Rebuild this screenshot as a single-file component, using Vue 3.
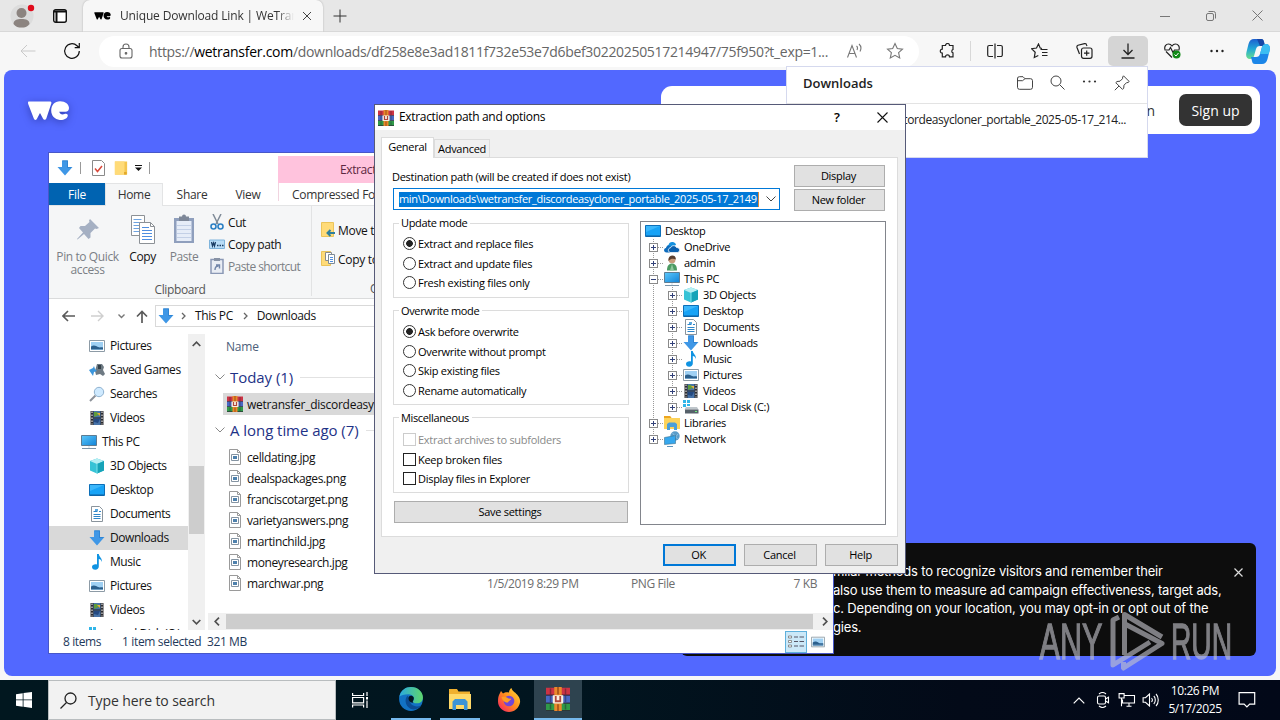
<script setup>
import { ref } from 'vue'

const navItems = ref([
  { name: 'Pictures', icon: 'pictures' },
  { name: 'Saved Games', icon: 'games' },
  { name: 'Searches', icon: 'lens' },
  { name: 'Videos', icon: 'videos' },
  { name: 'This PC', icon: 'pc', root: true },
  { name: '3D Objects', icon: 'cube' },
  { name: 'Desktop', icon: 'desktop' },
  { name: 'Documents', icon: 'docs' },
  { name: 'Downloads', icon: 'down', active: true },
  { name: 'Music', icon: 'music' },
  { name: 'Pictures', icon: 'pictures' },
  { name: 'Videos', icon: 'videos' },
  { name: 'Local Disk (C:)', icon: 'disk' }
])

const files = ref([
  { name: 'celldating.jpg' },
  { name: 'dealspackages.png' },
  { name: 'franciscotarget.png' },
  { name: 'varietyanswers.png' },
  { name: 'martinchild.jpg' },
  { name: 'moneyresearch.jpg' },
  { name: 'marchwar.png', date: '1/5/2019 8:29 PM', type: 'PNG File', size: '7 KB' }
])

const tree = ref([
  { name: 'Desktop', icon: 'desktop', level: 0 },
  { name: 'OneDrive', icon: 'cloud', level: 1 },
  { name: 'admin', icon: 'user', level: 1 },
  { name: 'This PC', icon: 'pc', level: 1, open: true },
  { name: '3D Objects', icon: 'cube', level: 2 },
  { name: 'Desktop', icon: 'desktop', level: 2 },
  { name: 'Documents', icon: 'docs', level: 2 },
  { name: 'Downloads', icon: 'down', level: 2 },
  { name: 'Music', icon: 'music', level: 2 },
  { name: 'Pictures', icon: 'pictures', level: 2 },
  { name: 'Videos', icon: 'videos', level: 2 },
  { name: 'Local Disk (C:)', icon: 'disk', level: 2, end: true },
  { name: 'Libraries', icon: 'library', level: 1 },
  { name: 'Network', icon: 'network', level: 1, end: true }
])

const updateMode = ref('Extract and replace files')
const updateModes = ['Extract and replace files', 'Extract and update files', 'Fresh existing files only']

const overwriteMode = ref('Ask before overwrite')
const overwriteModes = ['Ask before overwrite', 'Overwrite without prompt', 'Skip existing files', 'Rename automatically']

const misc = ref([
  { name: 'Extract archives to subfolders', disabled: true },
  { name: 'Keep broken files' },
  { name: 'Display files in Explorer' }
])
</script>

<template>
  <div class="screen">
    <!-- icon sprite -->
    <svg class="sprite" width="0" height="0">
      <defs>
        <linearGradient id="g-blue" x1="0" y1="0" x2="1" y2="1"><stop offset="0" stop-color="#5cc8fb" /><stop offset="1" stop-color="#1183d8" /></linearGradient>
        <linearGradient id="g-edge" x1="0" y1="0" x2="1" y2="0"><stop offset="0" stop-color="#2aa9e0" /><stop offset="1" stop-color="#5fd66b" /></linearGradient>
        <linearGradient id="g-fox" x1="1" y1="0" x2="0" y2="1"><stop offset="0" stop-color="#ffe23a" /><stop offset=".5" stop-color="#ff8a1d" /><stop offset="1" stop-color="#f5156c" /></linearGradient>
        <linearGradient id="g-cop" x1="0" y1="0" x2="0" y2="1"><stop offset="0" stop-color="#1d5fd0" /><stop offset=".5" stop-color="#22a9d6" /><stop offset="1" stop-color="#6ade8c" /></linearGradient>
      </defs>
      <symbol id="i-pictures" viewBox="0 0 16 16"><path d="M.5 2.500h15v11H.5z" fill="#fff" stroke="#8d9ba6" /><path d="M2 4h12v8H2z" fill="#9fd0f3" /><path d="M2 8.500c3-2 5-.5 7 .5s3 0 5 .5V12H2z" fill="#2b5f8c" /><path d="M2 11h12v1H2z" fill="#6f9fc4" /></symbol>
      <symbol id="i-games" viewBox="0 0 16 16"><path d="M8 2h5l2 3-1 3 2 4-2 2-3-2-4 1-1-4z" fill="#6e7a83" /><path d="M9 3h3v4H9z" fill="#333f47" /><path d="M0 8l4-2 1-2 1 3 2 2-3 1-1 4-2-3z" fill="#3c96dc" /></symbol>
      <symbol id="i-lens" viewBox="0 0 16 16"><path d="M1 15l5.500-5.500" stroke="#8c9199" stroke-width="2" /><circle cx="10" cy="6" r="4.700" fill="#cfeaff" stroke="#8fb2d0" /></symbol>
      <symbol id="i-videos" viewBox="0 0 16 16"><path d="M1.500 1h13v14h-13z" fill="#2c2c30" /><path d="M4.500 1h7v14h-7z" fill="#4773a8" /><path d="M5 2h3l2 3-5 2z" fill="#5f9c3c" /><path d="M8 3h3v3z" fill="#e8b339" /><path d="M5 9h6l-2 4-4-1z" fill="#244a82" /><path d="M3 1.500v13M13 1.500v13" stroke="#fff" stroke-dasharray="1.500 1.500" /><path d="M4.500 8h7" stroke="#222" /></symbol>
      <symbol id="i-pc" viewBox="0 0 16 16"><path d="M.5 1.500h15v10H.5z" fill="url(#g-blue)" stroke="#5d7c93" /><path d="M1 14.500h14" stroke="#7d95a8" /><path d="M7 12h2v2H7z" fill="#e4ebf0" /></symbol>
      <symbol id="i-cube" viewBox="0 0 16 16"><path d="M8 .5l7 2.500v9.500L8 15.500 1 12.500V3z" fill="#37c3d6" /><path d="M8 .5L15 3 8 6 1 3z" fill="#b6eff3" /><path d="M8 6l7-3v9.500l-7 3z" fill="#16a3b8" /><path d="M8 6v9.500" stroke="#7ce2ea" /></symbol>
      <symbol id="i-desktop" viewBox="0 0 16 16"><path d="M.5 2.500h15v11H.5z" fill="#18a3f6" stroke="#0d6fb8" /><path d="M1 12.500h14v1H1z" fill="#0c5c9c" /><path d="M1 3h14L1 9z" fill="#3cb7fb" /></symbol>
      <symbol id="i-docs" viewBox="0 0 16 16"><path d="M2.500.5h8l3 3v12h-11z" fill="#fff" stroke="#8a949c" /><path d="M4.500 5.500h4M4.500 8.500h7M4.500 10.500h7M4.500 12.500h7M10 5.500h2" stroke="#2e86c9" /><path d="M6 3h3v2H6z" fill="#5aa8df" /></symbol>
      <symbol id="i-down" viewBox="0 0 16 16"><path d="M5 .5h6V7h4.500L8 15.500.5 7H5z" fill="#3f97e6" /><path d="M5.500.8h5v6.700h3.800" fill="none" stroke="#2a7bc9" stroke-width=".7" /></symbol>
      <symbol id="i-music" viewBox="0 0 16 16"><path d="M8 0h1.800c.3 3 3.700 4 3 8-.6-2-1.500-2.700-3-3v7.500c0 2-1.400 3.200-3.500 3.200S3 14.600 3 13c0-2 2.500-3.200 5-2.500z" fill="#0f93e2" /></symbol>
      <symbol id="i-disk" viewBox="0 0 16 16"><path d="M0 1h3v3H0zM4 1h3v3H4zM0 5h3v3H0zM4 5h3v2H4z" fill="#31b5e8" /><path d="M3 8h11l1.500 2.500h-14z" fill="#bfc6cb" /><path d="M2 10.500h13.500v4H2z" fill="#56616a" /><path d="M12 12.500h2" stroke="#6cf07b" /></symbol>
      <symbol id="i-cloud" viewBox="0 0 16 16"><path d="M5 11.500C2 10 2.500 6.500 4.500 6 5 3.500 7 2.500 9 3c1.800.3 2.600 1.500 3 2.700L5 12z" fill="#1490df" /><path d="M2.500 13.500C-.5 13.500-.8 9.500 2 9c.3-2.500 3-3.500 4.500-1.500l6.500 6z" fill="#0f6cbd" /><path d="M6 13.500c-2.500-1-2-4.500.5-4.700C7.500 6 11.500 6 12.500 8.500c3.500-.3 4.500 4.500 1 5z" fill="#0a5fae" stroke="#fff" stroke-width=".8" /></symbol>
      <symbol id="i-user" viewBox="0 0 16 16"><path d="M3 15.500c0-5 2-7 5-7s5 2 5 7z" fill="#4c9a62" /><path d="M8 9l2 6.500H6z" fill="#8ec79b" /><circle cx="8" cy="4.700" r="3.500" fill="#c99b7b" /><path d="M4.500 6c-1-7 8-7 7.300-1.500C10 3.500 7 3 4.500 6z" fill="#5a3f30" /></symbol>
      <symbol id="i-library" viewBox="0 0 16 16"><path d="M0 1h6l1.500 2H16v11H0z" fill="#fdd35a" /><path d="M0 1h6l1.500 2H0z" fill="#eda51f" /><path d="M3 15V9l2-1.500h6L13 9v6h-3v-3H6v3z" fill="#4b9fd8" /></symbol>
      <symbol id="i-network" viewBox="0 0 16 16"><circle cx="11" cy="5" r="4.700" fill="#5a9dca" /><path d="M8.500 2l5 6M14 3l-4 5" stroke="#a5d0ea" stroke-width=".7" /><path d="M.5 6.500L11.500 4.500v8L.5 13.500z" fill="#35a7ee" stroke="#39708f" stroke-width=".6" /><path d="M3 15.500h6" stroke="#5c93bb" /></symbol>
      <symbol id="i-rar" viewBox="0 0 16 16"><path d="M0 .5h16v5H0z" fill="#cc3344" /><path d="M0 5.500h16v5.200H0z" fill="#4868c4" /><path d="M0 10.700h16V16H0z" fill="#2f9a48" /><path d="M0 5h16v.8H0zM0 10.300h16v.8H0zM0 15.300h16v.7H0z" fill="#2b1f33" opacity=".8" /><path d="M2.500 1h1v4h-1zM12.500 1h1v4h-1zM2.500 6h1v4h-1zM12.500 6h1v4h-1zM2.500 11.500h1v3.500h-1zM12.500 11.500h1v3.500h-1z" fill="#1e1a30" opacity=".4" /><path d="M5.500 0h5v16h-5z" fill="#e98a2c" /><path d="M7.500 0h1v5h-1zM7.500 11.500h1V16h-1z" fill="#9e4c16" /><path d="M4.500 5.500h7v5.500h-7z" fill="#f8f0e2" /><path d="M6.500 6v3.500h3V6" fill="none" stroke="#b0463c" stroke-width="1.200" /></symbol>
      <symbol id="i-image" viewBox="0 0 14 16"><path d="M1.500.5h8l3 3v12h-11z" fill="#fff" stroke="#9a9a9a" /><path d="M9.500.5v3h3" fill="none" stroke="#9a9a9a" /><path d="M3.500 5.500h7v6h-7z" fill="#fff" stroke="#8594a2" /><path d="M5 7h4v3H5z" fill="#4e81ad" /></symbol>
      <symbol id="i-we" viewBox="0 0 41 20"><path d="M1 .6h21c1.200 0 1.700 1 1.300 2l-5 14.800c-.7 1.700-2.500 1.700-3.200.3L12 12l-3.200 6c-.8 1.300-2.500 1.200-3-.4L.2 3C-.2 1.500 0 .6 1 .6z" /><path d="M32 .2c5.500 0 9 3.200 9 6.800 0 2.300-1.300 3.800-3.500 3.800h-6.300c.5 2.300 3 3.200 5.300 2.200 1.700-.8 3.500-.2 3.300 1.700-.3 2.500-4.200 4.700-8 4.300-5-.4-8.600-4.200-8.600-9.400C23.200 4 26.700.2 32 .2z" /></symbol>
      <symbol id="i-folder" viewBox="0 0 16 16"><path d="M1 0h14v15H1z" fill="#f4c64f" /><path d="M1 0h11v15H1z" fill="#ffdb78" /><path d="M11.500 12h3v3h-3z" fill="#e3a928" /></symbol>
    </svg>

    <!-- browser -->
    <div class="browser">
      <div class="tab-strip">
        <svg class="avatar" width="28" height="28" viewBox="0 0 28 28"><circle cx="14" cy="14" r="11.500" fill="#dcdcdc" /><circle cx="13.500" cy="11" r="5" fill="#8c8480" /><path d="M5.500 22c0-4 3.500-5 8-5s8 1 8 5c-2 3-5 3.500-8 3.500s-6-.5-8-3.500z" fill="#8c8480" /><circle cx="23" cy="6" r="3.200" fill="#e00b1c" /></svg>
        <svg class="workspace" width="14" height="14" viewBox="0 0 14 14"><rect x=".7" y=".7" width="12.600" height="12.600" rx="2" fill="#fff" stroke="#111" stroke-width="1.400" /><path d="M.7 2.500h12.600M3.500 3v10" stroke="#111" stroke-width="2" /></svg>
        <div class="tab">
          <svg class="tab-logo" width="17" height="8"><use href="#i-we" /></svg>
          <span class="tab-title">Unique Download Link | WeTransfer</span>
          <svg width="10" height="10" viewBox="0 0 10 10" fill="none" stroke="#444"><path d="M1 1l8 8M9 1L1 9" /></svg>
        </div>
        <svg class="plus" width="14" height="14" viewBox="0 0 14 14" stroke="#333"><path d="M7 .5v13M.5 7h13" /></svg>
        <div class="win-buttons">
          <svg width="10" height="10" viewBox="0 0 10 10" stroke="#777"><path d="M0 5.500h10" /></svg>
          <svg width="10" height="10" viewBox="0 0 10 10" fill="none" stroke="#777"><rect x=".5" y="2.500" width="7" height="7" rx="1.500" /><path d="M2.500.5h5a2 2 0 0 1 2 2v5" /></svg>
          <svg width="11" height="11" viewBox="0 0 11 11" stroke="#777"><path d="M.5.5l10 10M10.500.5l-10 10" /></svg>
        </div>
      </div>

      <div class="toolbar">
        <svg class="back" width="16" height="14" viewBox="0 0 16 14" fill="none" stroke="#c9c9c9"><path d="M15.500 7H1M7 1L1 7l6 6" /></svg>
        <svg class="reload" width="18" height="18" viewBox="0 0 18 18" fill="none" stroke="#111" stroke-width="1.200"><path d="M16.300 9a7.300 7.300 0 1 1-2.300-5.300L16 5.500M16.300 1v4.700h-4.600" /></svg>
        <div class="address">
          <svg width="14" height="16" viewBox="0 0 14 16" fill="none" stroke="#666" stroke-width="1.100"><rect x="1" y="5.500" width="12" height="9.500" rx="2" /><path d="M4 5.500V4a3 3 0 0 1 6 0v1.500" /><circle cx="7" cy="10.300" r=".8" fill="#666" /></svg>
          <span class="url">https://<b>wetransfer.com</b>/downloads/df258e8e3ad1811f732e53e7d6bef30220250517214947/75f950?t_exp=1...</span>
          <svg class="read" width="16" height="16" viewBox="0 0 16 16" fill="none" stroke="#777" stroke-width="1.100"><path d="M.5 14.500l4.500-12 4.500 12M2 10.500h6M9.500 3c1 .8 1.200 2.500.5 4M12 1c2 1.800 2.300 5 1 7.500" /></svg>
          <svg width="18" height="18" viewBox="0 0 18 18" fill="none" stroke="#777" stroke-width="1.100"><path d="M9 1.500l2.300 5 5.200.6-3.900 3.600 1.100 5.300L9 13.300 4.300 16l1.100-5.300L1.500 7.100l5.200-.6z" /></svg>
        </div>
        <div class="tools">
          <svg width="16" height="16" viewBox="0 0 16 16" fill="none" stroke="#222" stroke-width="1.200"><path d="M5 2.500H6.500a2 2 0 0 1 4 0H14v4a1.800 1.800 0 0 0 0 3.400v4h-3.500a2 2 0 0 0-4 0H3.300V10.200a2 2 0 1 1 0-4V2.500z" /></svg>
          <i class="tool-sep"></i>
          <svg width="16" height="16" viewBox="0 0 16 16" fill="none" stroke="#222" stroke-width="1.200"><path d="M6 2.500H2.200a1.500 1.500 0 0 0-1.500 1.500v8a1.500 1.500 0 0 0 1.500 1.500H6M10 2.500h3.800a1.500 1.500 0 0 1 1.500 1.500v8a1.500 1.500 0 0 1-1.500 1.500H10M8 .5v15" /></svg>
          <svg width="17" height="16" viewBox="0 0 17 16" fill="none" stroke="#222" stroke-width="1.200"><path d="M11 5.500L9.200 5 7.500 1 5.500 5l-5 .7L4.200 9.200 3.300 14.500l4-2M9.500 6.500h7M11 9.500h5.500M11 12.500h5.500" /></svg>
          <svg width="17" height="16" viewBox="0 0 17 16" fill="none" stroke="#222" stroke-width="1.200"><rect x="5.500" y="5" width="10.500" height="10.300" rx="2" /><path d="M10.700 7.500v5.300M8 10.200h5.400M3.500 11L1 4.500c-.3-1 .3-2 1-2.300L8.500.7c1-.2 1.800.2 2 1.200l.5 1.200" /></svg>
          <span class="dl-btn"><svg width="14" height="16" viewBox="0 0 14 16" fill="none" stroke="#222" stroke-width="1.300"><path d="M7 .5v11M2.500 7L7 11.500 11.500 7M.5 15h13" /></svg></span>
          <svg width="17" height="16" viewBox="0 0 17 16" fill="none" stroke="#222" stroke-width="1.200"><path d="M8 14.500L2 8.500M1 6.500C0 3.500 2 1 4.500 1 6.200 1 7.200 1.800 8 3c.8-1.200 1.800-2 3.500-2C14 1 16 3.500 15 6.500M.5 7H5l1.500-2.500 2.500 5L10.500 7h5" /><circle cx="12.500" cy="11.500" r="4" fill="#118a17" stroke="none" /><path d="M10.500 11.500l1.500 1.500 2.500-3" stroke="#fff" stroke-width="1" /></svg>
          <svg width="16" height="4" viewBox="0 0 16 4" fill="#222"><circle cx="2.500" cy="2" r="1.200" /><circle cx="8" cy="2" r="1.200" /><circle cx="13.500" cy="2" r="1.200" /></svg>
        </div>
        <svg class="copilot" width="24" height="27" viewBox="0 0 24 27"><path d="M8 1h7c2 0 2.500 1 3 3l1 4h-5c-2.500 0-3.300 1-4 3l-2 7c-.7 2-1.500 3-4 3-3.500 0-4.500-3-3.500-7l2-8C3.500 2.500 5 1 8 1z" fill="url(#g-cop)" /><path d="M16 26H9c-2 0-2.600-1-3-3l-1-4h5c2.500 0 3.300-1 4-3l2-7c.7-2 1.500-3 4-3 3.500 0 4.500 3 3.500 7l-2 8c-1 3.500-2.500 5-5.500 5z" fill="#1c86e8" /><path d="M11 1h4c2 0 2.500 1 3 3l1 4h-5z" fill="#1747a6" /><path d="M16 9c.7-2 1.500-3 4-3 3.500 0 4.500 3 3.500 7l-.8 3H14z" fill="#3bbdf2" /></svg>
      </div>

      <div class="page">
        <svg class="we-logo" width="41" height="20"><use href="#i-we" fill="#fff" /></svg>
        <div class="site-nav">
          <span>Log in</span>
          <button class="signup">Sign up</button>
        </div>
        <div class="cookie">
          <div class="cookie-text">
            <p>milar methods to recognize visitors and remember their</p>
            <p>also use them to measure ad campaign effectiveness, target ads,</p>
            <p>c. Depending on your location, you may opt-in or opt out of the</p>
            <p>gies.</p>
          </div>
          <svg width="9" height="9" viewBox="0 0 9 9" stroke="#ddd" stroke-width="1.200"><path d="M.5.5l8 8M8.500.5l-8 8" /></svg>
        </div>
      </div>

      <div class="downloads">
        <div class="dl-head">
          <strong>Downloads</strong>
          <svg width="16" height="14" viewBox="0 0 16 14" fill="none" stroke="#444"><path d="M.5 3A2 2 0 0 1 2.500.7H6l2 2h5.500a2 2 0 0 1 2 2v6.600a2 2 0 0 1-2 2h-11a2 2 0 0 1-2-2zM.5 4.700h5l2.500-2" /></svg>
          <svg width="15" height="15" viewBox="0 0 15 15" fill="none" stroke="#444"><circle cx="6" cy="6" r="5" /><path d="M9.700 9.700l4.800 4.800" /></svg>
          <svg width="15" height="15" viewBox="0 0 15 15" fill="#333"><circle cx="2" cy="6.500" r="1.100" /><circle cx="7.500" cy="6.500" r="1.100" /><circle cx="13" cy="6.500" r="1.100" /></svg>
          <svg width="16" height="16" viewBox="0 0 16 16" fill="none" stroke="#444"><path d="M9.500.8l5.700 5.700-1.200 1-1.500.2-2.500 2.500-.3 3-1.200 1.200-6.700-6.700L3 6.500l3-.3 2.500-2.500.2-1.700zM5 11L.8 15.200" /></svg>
        </div>
        <div class="dl-row">wetransfer_discordeasycloner_portable_2025-05-17_214...</div>
      </div>
    </div>

    <!-- file explorer -->
    <div class="explorer">
      <div class="ex-title">
        <div class="qat">
          <svg width="16" height="16"><use href="#i-down" /></svg>
          <i></i>
          <svg class="q-doc" width="13" height="16" viewBox="0 0 13 16"><path d="M.5.500h9l3 3v12H.5z" fill="#fff" stroke="#8a8a8a" /><path d="M3 8.500l2.500 3L10 6" fill="none" stroke="#d8483a" stroke-width="1.500" /></svg>
          <svg class="q-folder" width="14" height="15"><use href="#i-folder" /></svg>
          <svg class="q-drop" width="7" height="6" viewBox="0 0 7 6"><path d="M0 .5h7" stroke="#111" /><path d="M0 2.500h7L3.500 6z" fill="#111" /></svg>
          <i></i>
        </div>
        <div class="ctx-tab">Extract</div>
      </div>
      <div class="ex-tabs">
        <span class="file">File</span><span class="home">Home</span><span class="share">Share</span><span class="view">View</span><span class="zip">Compressed Folder Tools</span>
      </div>
      <div class="ribbon">
        <div class="r-clip">
          <div class="r-body">
            <div class="big pin dim">
              <svg width="32" height="32" viewBox="0 0 32 32" fill="#a5b0c3"><path d="M18 5l9 9-2.500 1-1.500-.5-4.500 4.500v4.500L16.500 25 12 20l-6.500 5.500L5 25l6-6.500L7 14l1.500-2h4.500L17.500 8 17 6.500z" /></svg>
              <span>Pin to Quick<br>access</span>
            </div>
            <div class="big copy">
              <svg width="32" height="32" viewBox="0 0 32 32"><path d="M4.500 1.500h13v20h-13z" fill="#fff" stroke="#8c9196" /><path d="M6.500 5.500h8M6.500 8.500h9M6.500 11.500h9M6.500 14.500h9M6.500 17.500h9" stroke="#6ea3e0" /><path d="M12.500 8.500h11l4 4v17h-15z" fill="#fff" stroke="#8c9196" /><path d="M23.500 8.500v4h4" fill="none" stroke="#8c9196" /><path d="M15 13.500h7M15 16.500h10M15 19.500h10M15 22.500h10M15 25.500h10" stroke="#4f8ee0" /></svg>
              <span>Copy</span>
            </div>
            <div class="big paste dim">
              <svg width="32" height="32" viewBox="0 0 32 32"><path d="M6 4h20v25H6z" fill="#8f9fbd" /><path d="M8.500 7h15v20h-15z" fill="#e6edf8" /><path d="M11 2.500h3a2 2 0 0 1 4 0h3V7H11z" fill="#7d8798" /><path d="M9 11.500h14M9 15.500h14M9 19.500h14M9 23.500h14" stroke="#c3d0e6" /></svg>
              <span>Paste</span>
            </div>
            <div class="small">
              <div>
                <svg width="16" height="16" viewBox="0 0 16 16"><path d="M4 0l5 10M12 0L7 10" stroke="#7f8b98" stroke-width="1.500" /><circle cx="4.500" cy="12.500" r="2.500" fill="none" stroke="#2c80c4" stroke-width="1.600" /><circle cx="11.500" cy="12.500" r="2.500" fill="none" stroke="#2c80c4" stroke-width="1.600" /></svg>Cut
              </div>
              <div>
                <svg width="16" height="16" viewBox="0 0 16 16"><path d="M.5 4h15v8.500H.5z" fill="#b9ddf7" stroke="#7fb4dc" /><path d="M2.500 6l1 4 1-3 1 3 1-4" fill="none" stroke="#1a3c63" stroke-width="1.200" /><path d="M8 9.500h1.500M10.500 9.500H12M13 9.500h1.500" stroke="#1a3c63" stroke-width="1.500" /></svg>Copy path
              </div>
              <div class="dim">
                <svg width="16" height="16" viewBox="0 0 16 16"><path d="M2 1.500h12v14H2z" fill="#e9edf4" stroke="#8a98b5" stroke-width="1.500" /><path d="M5 0h6v3H5z" fill="#8792a5" /><path d="M6 12c0-3 1-4 3.500-4M7 7h3.500v3.500" fill="none" stroke="#7084a8" stroke-width="1.400" /></svg>Paste shortcut
              </div>
            </div>
          </div>
          <div class="r-label">Clipboard</div>
        </div>
        <div class="r-org">
          <div class="r-line"><svg width="14" height="16" viewBox="0 0 14 16"><path d="M.5.5h12v14H.5z" fill="#ffdb78" stroke="#ebc45a" /><path d="M14 11H6.500M9.500 8l-3 3 3 3" fill="none" stroke="#2f7f9c" stroke-width="2" /></svg>Move to</div>
          <div class="r-line"><svg width="14" height="16" viewBox="0 0 14 16"><path d="M.5.5h9v14H.5z" fill="#ffdb78" stroke="#ebc45a" /><path d="M4.500 1.500h6v8h-6z" fill="#fff" stroke="#8a8a8a" /><path d="M7.500 3.500h6v9h-6z" fill="#fff" stroke="#7c8a96" /><path d="M9 6.500h3M9 8.500h3M9 10.500h3" stroke="#4f8ee0" /></svg>Copy to</div>
          <div class="org-label">Organize</div>
        </div>
      </div>
      <div class="ex-address">
        <svg class="a-back" width="13" height="12" viewBox="0 0 13 12" fill="none" stroke="#5a5a5a" stroke-width="1.600"><path d="M13 6H1.500M6 1L1 6l5 5" /></svg>
        <svg class="a-fwd" width="13" height="12" viewBox="0 0 13 12" fill="none" stroke="#cfcfcf" stroke-width="1.400"><path d="M0 6h11.500M7 1l5 5-5 5" /></svg>
        <svg class="a-drop" width="7" height="5" viewBox="0 0 7 5" fill="none" stroke="#777" stroke-width="1.400"><path d="M.5.5l3 3 3-3" /></svg>
        <svg class="a-up" width="12" height="13" viewBox="0 0 12 13" fill="none" stroke="#5a5a5a" stroke-width="1.700"><path d="M6 13V1.500M1 6.500l5-5 5 5" /></svg>
        <div class="crumbs">
          <svg width="16" height="16"><use href="#i-down" /></svg>
          <svg class="crumb-sep" width="5" height="8" viewBox="0 0 5 8" fill="none" stroke="#666" stroke-width="1.300"><path d="M1 1l3 3-3 3" /></svg>
          <span>This PC</span>
          <svg class="crumb-sep" width="5" height="8" viewBox="0 0 5 8" fill="none" stroke="#666" stroke-width="1.300"><path d="M1 1l3 3-3 3" /></svg>
          <span>Downloads</span>
        </div>
      </div>
      <div class="ex-main">
        <div class="nav-pane">
          <div v-for="(item, i) in navItems" :key="i" class="nav-item" :class="{ root: item.root, active: item.active }">
            <svg width="16" height="16"><use :href="'#i-' + item.icon" /></svg><span>{{ item.name }}</span>
          </div>
        </div>
        <div class="v-scroll">
          <svg width="9" height="6" viewBox="0 0 9 6" fill="none" stroke="#505050" stroke-width="1.700"><path d="M.7 5l3.800-3.800L8.300 5" /></svg>
          <i class="v-thumb"></i>
          <svg width="9" height="6" viewBox="0 0 9 6" fill="none" stroke="#505050" stroke-width="1.700"><path d="M.7 1l3.800 3.800L8.300 1" /></svg>
        </div>
        <div class="file-pane">
          <div class="col-head">Name</div>
          <div class="group"><svg width="10" height="6" viewBox="0 0 10 6" fill="none" stroke="#888"><path d="M.5.5L5 5 9.500.5" /></svg>Today (1)<i></i></div>
          <div class="picked"><svg width="16" height="16"><use href="#i-rar" /></svg>wetransfer_discordeasycloner_portable</div>
          <div class="group second"><svg width="10" height="6" viewBox="0 0 10 6" fill="none" stroke="#888"><path d="M.5.5L5 5 9.500.5" /></svg>A long time ago (7)<i></i></div>
          <div v-for="f in files" :key="f.name" class="file-row">
            <svg width="14" height="16"><use href="#i-image" /></svg>
            <span class="f-name">{{ f.name }}</span>
            <span class="f-date">{{ f.date }}</span>
            <span class="f-type">{{ f.type }}</span>
            <span class="f-size">{{ f.size }}</span>
          </div>
          <div class="h-scroll">
            <svg width="6" height="9" viewBox="0 0 6 9" fill="none" stroke="#505050" stroke-width="1.700"><path d="M5 .7L1.200 4.500 5 8.300" /></svg>
            <i></i>
            <svg width="6" height="9" viewBox="0 0 6 9" fill="none" stroke="#505050" stroke-width="1.700"><path d="M1 .7l3.800 3.800L1 8.300" /></svg>
          </div>
        </div>
      </div>
      <div class="status">
        <span class="s1">8 items</span><span class="s2">1 item selected</span><span>321 MB</span>
        <div class="v-details"><svg width="16" height="13" viewBox="0 0 16 13"><path d="M.5 1h3v2h-3zM.5 5.500h3v2h-3zM.5 10h3v2h-3z" fill="#fff" stroke="#777" stroke-width=".8" /><path d="M6 2h4M11.500 2H16M6 6.500h4M11.500 6.500H16M6 11h4M11.500 11H16" stroke="#556" /></svg></div>
        <svg class="v-icons" width="14" height="14"><use href="#i-pictures" /></svg>
      </div>
    </div>

    <!-- extraction dialog -->
    <div class="dialog">
      <div class="d-title">
        <svg width="16" height="16"><use href="#i-rar" /></svg>
        <span>Extraction path and options</span>
        <b>?</b>
        <svg width="11" height="11" viewBox="0 0 11 11" stroke="#111" stroke-width="1.100"><path d="M.5.5l10 10M10.500.5l-10 10" /></svg>
      </div>
      <div class="d-tabs">
        <span class="on">General</span><span>Advanced</span>
      </div>
      <div class="d-page">
        <div class="d-top">
          <div class="d-path">
            <label>Destination path (will be created if does not exist)</label>
            <div class="combo">
              <span>min\Downloads\wetransfer_discordeasycloner_portable_2025-05-17_2149</span>
              <svg width="10" height="6" viewBox="0 0 10 6" fill="none" stroke="#444"><path d="M.5.5L5 5 9.500.5" /></svg>
            </div>
          </div>
          <div class="d-side">
            <button>Display</button>
            <button>New folder</button>
          </div>
        </div>
        <div class="d-cols">
          <div class="d-left">
            <div class="box update">
              <h4>Update mode</h4>
              <div v-for="m in updateModes" :key="m" class="opt" @click="updateMode = m"><i class="radio" :class="{ on: updateMode === m }"></i>{{ m }}</div>
            </div>
            <div class="box overwrite">
              <h4>Overwrite mode</h4>
              <div v-for="m in overwriteModes" :key="m" class="opt" @click="overwriteMode = m"><i class="radio" :class="{ on: overwriteMode === m }"></i>{{ m }}</div>
            </div>
            <div class="box misc">
              <h4>Miscellaneous</h4>
              <div v-for="m in misc" :key="m.name" class="opt" :class="{ off: m.disabled }"><i class="check"></i>{{ m.name }}</div>
            </div>
            <button class="save">Save settings</button>
          </div>
          <div class="tree">
            <div v-for="(n, i) in tree" :key="i" class="node" :class="{ end: n.end }">
              <i v-if="n.level === 2" class="trunk"></i>
              <span v-if="n.level" class="branch"><svg width="9" height="9" viewBox="0 0 9 9" fill="#fff" stroke="#8a8a8a"><rect x=".5" y=".5" width="8" height="8" /><path :d="n.open ? 'M2 4.500h5' : 'M2 4.500h5M4.500 2v5'" stroke="#33427a" /></svg></span>
              <svg class="n-icon" width="16" height="16"><use :href="'#i-' + n.icon" /></svg>{{ n.name }}
            </div>
          </div>
        </div>
      </div>
      <div class="d-foot">
        <button class="ok">OK</button>
        <button>Cancel</button>
        <button>Help</button>
      </div>
    </div>

    <!-- taskbar -->
    <div class="taskbar">
      <div class="start"><svg width="16" height="16" viewBox="0 0 16 16" fill="#fff"><path d="M0 2.200l6.700-1v6.300H0zM7.500 1.100L16 0v7.500H7.500zM0 8.300h6.700v6.400l-6.700-1zM7.500 8.300H16V16l-8.500-1.200z" /></svg></div>
      <div class="search">
        <svg width="17" height="17" viewBox="0 0 17 17" fill="none" stroke="#222" stroke-width="1.300"><circle cx="10.500" cy="6.500" r="5.500" /><path d="M6.500 10.500L.5 16.500" /></svg>
        Type here to search
      </div>
      <div class="task view-btn"><svg width="17" height="16" viewBox="0 0 17 16" fill="none" stroke="#fff" stroke-width="1.200"><path d="M.6 1v2.500h11V1M.6 15.500v-2.500h11v2.500M.6 5.500h11v5.300H.6zM15 0v4M15 8.500V16" /><path d="M15 5v2.500" stroke-width="2" /></svg></div>
      <div class="task run">
        <svg width="26" height="26" viewBox="0 0 24 24"><circle cx="12" cy="12" r="11" fill="#1272c4" /><path d="M1.200 10C2.500 4 7 1 12 1c6.500 0 11 4.600 11 9.500 0 3.500-2.500 5.500-5.500 5.500-2.800 0-4.300-1.200-3.500-2.200 1.800-2.300.3-6.300-4.500-6.300-3.700 0-7 1-8.300 2.500z" fill="url(#g-edge)" /><path d="M9 9c-3 2-3 9 2.500 12 4 1.500 8 0 10-3-6 2.500-11-1-10.500-5z" fill="#0b4c94" /><path d="M10 10c1-1.500 3.800-1.300 4.500.7.300 1.200-.1 2.300-.8 3.300-.2.700 0 1 .5 1.400-3 .5-5.200-2.400-4.200-5.400z" fill="#02151f" /></svg>
      </div>
      <div class="task run">
        <svg width="22" height="22" viewBox="0 0 22 22"><path d="M0 1h8l1.500 2.500H21V21H0z" fill="#f0b02e" /><path d="M0 6h22v15H0z" fill="#ffd968" /><path d="M3.500 22v-8.500L6 11h10l2.500 2.500V22H15v-5H7v5z" fill="#3d94d6" /></svg>
      </div>
      <div class="task">
        <svg width="24" height="24" viewBox="0 0 24 24"><path d="M2 7l2-4 2 2.500C8 4 10 4 12 4.500 12 2.500 13 1 14.500 0c.5 3 3.500 4 5.500 6.500C22 8.500 23.500 11 23 14.500 22 20 17.500 24 12 24S1 19.500 1 13.500C1 11 1.200 9 2 7z" fill="url(#g-fox)" /><circle cx="12" cy="13" r="5.300" fill="#7046d8" /><path d="M4.500 9c3-.5 5 0 7 1.500l3 .2c-1 1.800-2.500 1.700-3.500 3.800-2 .5-5.500-1-6.500-5.500z" fill="#ff9d22" /></svg>
      </div>
      <div class="task run on">
        <svg width="24" height="24"><use href="#i-rar" /></svg>
      </div>
      <div class="tray">
        <svg width="12" height="7" viewBox="0 0 12 7" fill="none" stroke="#fff" stroke-width="1.200"><path d="M.7 6.300L6 1l5.300 5.300" /></svg>
        <svg width="14" height="16" viewBox="0 0 14 16" fill="none" stroke="#fff" stroke-width="1.100"><rect x="1.500" y="4" width="8" height="8" rx="1.500" /><path d="M9.500 7l3-1.700v5.400l-3-1.700M3 2c2-1.700 5-1.700 7 0M3 14c2 1.700 5 1.700 7 0" /></svg>
        <svg width="17" height="14" viewBox="0 0 17 14" fill="none" stroke="#fff" stroke-width="1.100"><path d="M6 2.500h10v7.500H4V6.500M8 13.300h5M10.500 10v3M.6.600h5V5h-5zM3 5v8.300" /></svg>
        <svg width="17" height="14" viewBox="0 0 17 14" fill="none" stroke="#fff" stroke-width="1.100"><path d="M.6 4.700H3L7 1v12L3 9.300H.6zM9 5c.9 1 .9 3 0 4M11.300 3c2 2 2 6 0 8M13.500 1c3 3 3 9 0 12" /></svg>
        <div class="clock">10:26 PM<br>5/17/2025</div>
        <svg width="17" height="16" viewBox="0 0 17 16" fill="none" stroke="#fff" stroke-width="1.200"><path d="M.6.600h15.600v11.600h-5L8.400 15l-2.800-2.800h-5z" /></svg>
      </div>
    </div>

    <!-- watermark -->
    <svg class="mark" width="196" height="66" viewBox="0 0 196 66">
      <text x="2.500" y="50" textLength="63" lengthAdjust="spacingAndGlyphs">ANY</text>
      <text x="134" y="50" textLength="61" lengthAdjust="spacingAndGlyphs">RUN</text>
      <g fill="none" stroke="#c4c4cc" stroke-width="5" stroke-linejoin="round"><path d="M82 8l-6 3v45l37-23" /><path d="M87.500 46V5.500l37.500 22.500" /><path d="M88 15l37 19.500L86.500 59v-6" /></g>
    </svg>
  </div>
</template>

<style>
body {
  background-color: #f7f7f7;
  overflow: hidden;
}
</style>

<style scoped>
.screen {
  position: relative;
  width: 1280px;
  height: 720px;
  overflow: hidden;
  display: flex;
  flex-direction: column;
  font-family: "Open Sans", "Noto Sans", sans-serif;
  font-size: 12px;
  color: #111;
  white-space: nowrap;
}

.screen * {
  box-sizing: border-box;
}

.sprite {
  position: absolute;
}

svg {
  flex: none;
}

button {
  font: inherit;
  letter-spacing: inherit;
  padding: 0;
}

/* Browser */
.browser {
  position: relative;
  height: 680px;
  background: #f7f7f7;
}

.tab-strip {
  height: 32px;
  display: flex;
  align-items: center;
  background: #e7e7e7;
  border-bottom: 1px solid #d8d8d8;
}

.avatar {
  margin-left: 8px;
}

.workspace {
  margin-left: 17px;
}

.tab {
  width: 240px;
  height: 32px;
  margin-left: 16px;
  padding-left: 11px;
  display: flex;
  align-items: center;
  background: #f7f7f7;
  border-radius: 7px 7px 0 0;
  box-shadow: 0 0 2px rgba(0, 0, 0, 0.25);
  clip-path: inset(-2px -2px 0 -2px);
}

.tab-title {
  width: 174px;
  margin: 0 8px 0 9px;
  overflow: hidden;
  color: #333;
  letter-spacing: -0.15px;
  -webkit-mask-image: linear-gradient(90deg, #000 90%, transparent);
  mask-image: linear-gradient(90deg, #000 90%, transparent);
}

.plus {
  margin-left: 10px;
}

.win-buttons {
  margin-left: auto;
  margin-right: 17px;
  display: flex;
  gap: 36px;
  align-items: center;
}

.toolbar {
  height: 38px;
  display: flex;
  align-items: center;
}

.back {
  margin-left: 20px;
}

.reload {
  margin-left: 27px;
}

.address {
  flex: none;
  width: 820px;
  height: 31px;
  margin-left: 18px;
  padding-left: 20px;
  display: flex;
  align-items: center;
  border-radius: 16px;
  background: #fff;
}

.url {
  flex: none;
  width: 690px;
  margin-left: 16px;
  font-size: 14px;
  letter-spacing: -0.32px;
  color: #666;
}

.url b {
  font-weight: 400;
  letter-spacing: -0.27px;
  color: #000;
}

.read {
  margin-right: 23px;
  margin-left: 8px;
}

.tools {
  flex: none;
  display: flex;
  align-items: center;
  margin-left: 20px;
}

.tools > svg {
  margin-right: 28px;
}

.tools > svg:first-child {
  margin-right: 15px;
}

.tools > svg:last-child {
  margin-right: 21px;
}

.tool-sep {
  width: 1px;
  height: 20px;
  margin-right: 16px;
  background: #d8d8d8;
}

.dl-btn {
  width: 40px;
  height: 30px;
  margin-left: -13px;
  margin-right: 16px;
  display: flex;
  align-items: center;
  justify-content: center;
  border-radius: 5px;
  background: #d5d5d5;
}

.page {
  position: relative;
  width: 1272px;
  height: 606px;
  margin-left: 4px;
  border-radius: 8px;
  background: #5268ff;
  overflow: hidden;
}

.we-logo {
  position: absolute;
  left: 24px;
  top: 31px;
  overflow: visible;
  filter: drop-shadow(0 2px 4px rgba(0, 0, 60, 0.35));
}

.site-nav {
  position: absolute;
  left: 657px;
  top: 16px;
  width: 599px;
  height: 48px;
  padding-right: 8px;
  display: flex;
  align-items: center;
  justify-content: flex-end;
  gap: 24px;
  border-radius: 11px;
  background: #fff;
  font-size: 14px;
  color: #333;
}

.signup {
  width: 73px;
  height: 32px;
  border: 0;
  border-radius: 7px;
  background: #333;
  color: #fff;
}

.cookie {
  position: absolute;
  left: 677px;
  top: 473px;
  width: 575px;
  height: 113px;
  padding: 19px 13px 0 152px;
  display: flex;
  align-items: flex-start;
  justify-content: space-between;
  border-radius: 6px;
  background: #0d0d0d;
  color: #fff;
  font-family: Inter, "Open Sans", sans-serif;
  font-size: 13px;
  line-height: 18.5px;
  letter-spacing: -0.18px;
}

.cookie svg {
  margin-top: 6px;
}

.cookie p {
  margin: 0;
}

.downloads {
  position: absolute;
  left: 786px;
  top: 66px;
  width: 362px;
  height: 92px;
  border: 1px solid #d5d9ee;
  background: #fff;
}

.dl-head {
  height: 37px;
  padding: 0 17px 5px 16px;
  display: flex;
  align-items: center;
  gap: 17px;
  border-bottom: 1px solid #e3e3e3;
}

.dl-head strong {
  margin-right: auto;
  font-size: 13px;
  font-weight: 600;
  color: #222;
}

.dl-row {
  padding: 7px 21px 0 0;
  display: flex;
  justify-content: flex-end;
  color: #222;
  letter-spacing: -0.42px;
}

/* Explorer */
.explorer {
  position: absolute;
  left: 48px;
  top: 152px;
  width: 786px;
  height: 502px;
  display: flex;
  flex-direction: column;
  border: 1px solid #4757c9;
  background: #fff;
  overflow: hidden;
  letter-spacing: -0.4px;
}

.ex-title {
  height: 30px;
  display: flex;
  justify-content: flex-start;
}

.qat {
  width: 229px;
  padding-left: 8px;
  display: flex;
  align-items: center;
}

.qat i {
  width: 1px;
  height: 12px;
  margin-left: 7px;
  background: #999;
}

.q-doc {
  margin-left: 11px;
}

.q-folder {
  margin-left: 9px;
}

.q-drop {
  margin-left: 7px;
}

.ctx-tab {
  flex: 1;
  margin-top: 3px;
  padding: 5px 0 0 62px;
  background: #ffc3dd;
  color: #5c2740;
}

.ex-tabs {
  height: 23px;
  display: flex;
  line-height: 24px;
  text-align: center;
  color: #333;
  border-bottom: 1px solid #e3e4e5;
  letter-spacing: -0.3px;
}

.ex-tabs .file {
  width: 56px;
  background: #0063b1;
  color: #fff;
}

.ex-tabs .home {
  width: 58px;
  height: 23px;
  background: #f5f6f7;
  border: 1px solid #e3e4e5;
  border-bottom: 0;
  line-height: 22px;
}

.ex-tabs .share {
  width: 58px;
}

.ex-tabs .view {
  width: 54px;
}

.ex-tabs .zip {
  margin-left: 3px;
  padding-left: 13px;
  height: 18px;
  border-left: 1px solid #f1d4e0;
}

.ribbon {
  height: 93px;
  display: flex;
  background: #f5f6f7;
  border-bottom: 1px solid #dadbdc;
}

.r-clip {
  width: 263px;
  height: 90px;
  border-right: 1px solid #e2e3e4;
}

.r-body {
  height: 75px;
  display: flex;
}

.big {
  display: flex;
  flex-direction: column;
  align-items: center;
  text-align: center;
  padding-top: 8px;
  line-height: 13px;
}

.big svg {
  margin-bottom: 4px;
}

.pin {
  width: 77px;
}

.copy {
  width: 33px;
}

.paste {
  width: 50px;
}

.dim {
  color: #7b7f85;
}

.small {
  padding: 5px 0 0 0;
}

.small div {
  height: 22px;
  display: flex;
  align-items: center;
  gap: 3px;
}

.small .dim {
  letter-spacing: -0.6px;
}

.r-label {
  text-align: center;
  color: #555;
}

.r-org {
  padding: 14px 0 0 9px;
}

.r-line {
  height: 20px;
  margin-bottom: 9px;
  display: flex;
  align-items: center;
  gap: 3px;
  letter-spacing: -0.3px;
}

.org-label {
  padding: 2px 0 0 49px;
  color: #555;
}

.ex-address {
  height: 35px;
  display: flex;
  align-items: flex-start;
  padding: 6px 0 0 13px;
}

.ex-address > svg {
  margin-top: 5px;
}

.a-fwd {
  margin-left: 16px;
}

.ex-address > .a-drop {
  margin-left: 14px;
  margin-top: 9px;
}

.a-up {
  margin-left: 11px;
}

.crumbs {
  flex: 1;
  height: 22px;
  margin-left: 7px;
  padding-left: 2px;
  display: flex;
  align-items: center;
  border: 1px solid #d9d9d9;
}

.crumbs span {
  padding-bottom: 1px;
}

.crumb-sep {
  margin: 0 9px 0 7px;
}

.crumbs span + .crumb-sep {
  margin-left: 10px;
}

.ex-main {
  height: 296px;
  display: flex;
  overflow: hidden;
}

.nav-pane {
  width: 139px;
  overflow: hidden;
}

.nav-item {
  height: 24px;
  padding-left: 40px;
  display: flex;
  align-items: center;
  gap: 5px;
  letter-spacing: -0.43px;
}

.nav-item span {
  padding-bottom: 1px;
}

.nav-item.root {
  padding-left: 32px;
}

.nav-item.active {
  background: #d9d9d9;
}

.v-scroll {
  width: 17px;
  padding: 7px 0 5px;
  display: flex;
  flex-direction: column;
  align-items: center;
  background: #f0f0f0;
}

.v-thumb {
  width: 15px;
  height: 68px;
  margin-top: 119px;
  margin-bottom: auto;
  background: #cdcdcd;
}

.file-pane {
  flex: 1;
  padding-left: 8px;
}

.col-head {
  height: 30px;
  padding: 4px 0 0 13px;
  color: #4c607a;
  letter-spacing: -0.2px;
}

.group {
  height: 27px;
  padding-left: 2px;
  padding-bottom: 1px;
  display: flex;
  align-items: center;
  gap: 5px;
  font-size: 15px;
  letter-spacing: -0.05px;
  color: #1e3287;
}

.group i {
  flex: 1;
  height: 1px;
  margin-left: 2px;
  background: #e2e2e2;
}

.group.second {
  height: 32px;
  padding-bottom: 2px;
}

.picked {
  height: 22px;
  margin: 2px 0 0 10px;
  padding-left: 4px;
  display: flex;
  align-items: center;
  gap: 4px;
  background: #d9d9d9;
  letter-spacing: -0.25px;
}

.file-row {
  height: 21px;
  padding-left: 15px;
  padding-bottom: 1px;
  display: flex;
  align-items: center;
}

.f-name {
  width: 240px;
  margin-left: 5px;
}

.f-date {
  width: 144px;
  color: #6d6d6d;
}

.f-type {
  width: 120px;
  color: #6d6d6d;
}

.f-size {
  width: 66px;
  text-align: right;
  color: #6d6d6d;
}

.h-scroll {
  height: 17px;
  margin-top: 19px;
  margin-left: -5px;
  padding: 0 0 0 6px;
  display: flex;
  align-items: center;
  background: #f0f0f0;
}

.h-scroll i {
  width: 587px;
  height: 15px;
  margin: 0 9px 0 6px;
  background: #cdcdcd;
}

.status {
  flex: 1;
  padding-left: 14px;
  display: flex;
  align-items: center;
  color: #1e395b;
}

.s1 {
  width: 59px;
}

.s2 {
  width: 85px;
  letter-spacing: -0.35px;
}

.v-details {
  width: 22px;
  height: 22px;
  margin-left: auto;
  display: flex;
  align-items: center;
  justify-content: center;
  border: 1px solid #5fb0dc;
  background: #cbe8f8;
}

.v-icons {
  margin: 0 8px 0 4px;
}

/* Dialog */
.dialog {
  position: absolute;
  left: 374px;
  top: 104px;
  width: 532px;
  height: 470px;
  border: 1px solid #565a78;
  background: #f0f0f0;
  font-size: 11px;
  letter-spacing: -0.28px;
  color: #000;
}

.d-title {
  height: 25px;
  padding: 0 17px 0 3px;
  display: flex;
  align-items: center;
  background: #fff;
  font-size: 12px;
}

.d-title span {
  flex: 1;
  margin-left: 5px;
  padding-bottom: 2px;
  letter-spacing: -0.33px;
}

.d-title b {
  width: 9px;
  margin-right: 34px;
  padding-bottom: 1px;
  font-size: 13px;
  font-weight: 600;
}

.d-tabs {
  height: 27px;
  padding: 7px 0 0 6px;
  display: flex;
  align-items: flex-end;
}

.d-tabs span {
  width: 56px;
  height: 18px;
  padding-top: 1px;
  text-align: center;
  border: 1px solid #dcdcdc;
  border-bottom: 0;
}

.d-tabs .on {
  position: relative;
  width: 53px;
  height: 21px;
  margin-bottom: -1px;
  padding-top: 1px;
  background: #fff;
}

.d-page {
  width: 517px;
  height: 380px;
  margin-left: 6px;
  padding: 7px 11px 0 11px;
  border: 1px solid #dcdcdc;
  background: #fff;
}

.d-top {
  display: flex;
  justify-content: space-between;
}

.d-path label {
  display: block;
  margin-left: -1px;
  padding-top: 4px;
  height: 23px;
}

.combo {
  width: 387px;
  height: 22px;
  padding: 0 3px 0 5px;
  display: flex;
  align-items: center;
  justify-content: space-between;
  border: 1px solid #0078d7;
}

.combo span {
  width: 360px;
  height: 15px;
  line-height: 13px;
  letter-spacing: -0.32px;
  background: #0078d7;
  border-right: 1px solid #d98a3a;
  color: #fff;
}

.d-side {
  width: 91px;
  margin-right: 1px;
  display: flex;
  flex-direction: column;
  gap: 2px;
}

.dialog button {
  height: 22px;
  padding: 0 2px 2px 0;
  border: 1px solid #adadad;
  background: #e1e1e1;
  color: #000;
}

.d-cols {
  display: flex;
  justify-content: space-between;
  margin-top: 10px;
}

.d-left {
  width: 236px;
}

.box {
  margin-top: 2px;
  padding-left: 9px;
  border: 1px solid #dcdcdc;
}

.box h4 {
  width: max-content;
  margin: -9px 0 4px -4px;
  padding: 0 3px 0 2px;
  font-size: 11px;
  font-weight: 400;
  line-height: 15px;
  letter-spacing: -0.35px;
  background: #fff;
}

.update {
  height: 75px;
}

.overwrite {
  height: 95px;
  margin-top: 12px;
}

.overwrite h4 {
  margin: -8px 0 4px -4px;
}

.misc {
  height: 76px;
  margin-top: 12px;
}

.misc h4 {
  margin: -8px 0 5px -4px;
}

.opt {
  height: 19.5px;
  display: flex;
  align-items: center;
  gap: 2px;
}

.opt.off {
  color: #8a8a8a;
}

.radio {
  width: 13px;
  height: 13px;
  border: 1px solid #333;
  border-radius: 50%;
  background: #fff;
}

.radio.on {
  background: radial-gradient(circle, #222 3px, #fff 3.7px);
}

.check {
  width: 13px;
  height: 13px;
  border: 1px solid #222;
}

.off .check {
  border-color: #ccc;
}

.d-left .save {
  width: 234px;
  margin: 8px 0 0 1px;
}

.tree {
  width: 246px;
  height: 304px;
  padding: 1px 0 0 4px;
  border: 1px solid #82858c;
}

.node {
  height: 16px;
  display: flex;
  align-items: center;
  line-height: 14px;
  padding-bottom: 1px;
}

.n-icon {
  margin-right: 4px;
}

.trunk {
  width: 19px;
  height: 16px;
  background: repeating-linear-gradient(#999 0 1px, transparent 1px 2px) 8px 0 / 1px 100% no-repeat;
}

.branch {
  width: 19px;
  height: 16px;
  padding: 4px 0 0 4px;
  background:
    repeating-linear-gradient(#999 0 1px, transparent 1px 2px) 8px 0 / 1px 100% no-repeat,
    repeating-linear-gradient(90deg, #999 0 1px, transparent 1px 2px) 13px 8px / 6px 1px no-repeat;
}

.branch svg {
  display: block;
}

/* last child keeps only the upper half of the line, and has no trunk beyond it */
.node.end .branch {
  background-size: 1px 8px, 6px 1px;
}

.d-foot {
  padding: 7px 7px 0 0;
  display: flex;
  justify-content: flex-end;
  gap: 8px;
}

.d-foot button {
  width: 73px;
}

.d-foot .ok {
  border: 2px solid #0078d7;
}

/* Taskbar */
.taskbar {
  height: 40px;
  display: flex;
  background: linear-gradient(90deg, #01171f 0%, #01151f 45%, #030a18 75%, #020818 100%);
  color: #fff;
}

.start {
  width: 48px;
  display: flex;
  align-items: center;
  justify-content: center;
}

.search {
  width: 288px;
  padding-left: 11px;
  display: flex;
  align-items: center;
  gap: 11px;
  border: 1px solid #b9bdbf;
  background: #f2f2f2;
  color: #333;
  font-size: 14px;
  letter-spacing: -0.1px;
}

.task {
  width: 40px;
  margin-right: 9px;
  display: flex;
  align-items: center;
  justify-content: center;
}

.task.run {
  border-bottom: 2px solid #76b9ed;
}

.task.view-btn {
  width: 48px;
  margin-right: 7px;
}

.task.on {
  width: 48px;
  margin-left: -4px;
  background: #2e434f;
}

.tray {
  margin-left: auto;
  padding-right: 21px;
  display: flex;
  align-items: center;
}

.tray svg {
  width: 24px;
}

.clock {
  width: 64px;
  margin-right: 8px;
  text-align: center;
  line-height: 18px;
  letter-spacing: -0.4px;
}

/* Watermark */
.mark {
  position: absolute;
  left: 1037px;
  top: 609px;
  opacity: 0.62;
}

.mark text {
  font-family: "Liberation Sans", sans-serif;
  font-size: 50px;
  fill: #c4c4cc;
  stroke: #c4c4cc;
  stroke-width: 1.3;
}
</style>
